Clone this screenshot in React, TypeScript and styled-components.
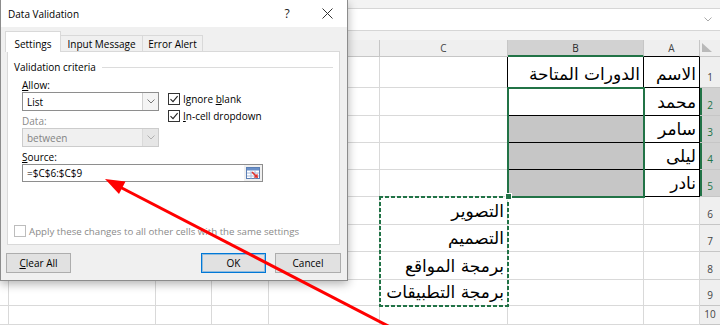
import styled, { createGlobalStyle } from 'styled-components'

const GREEN = '#217346'
const GRID_LINE = '#d9d9d9'
const HEAD_LINE = '#c6c6c6'
const UI_FONT = `'Open Sans', 'Noto Sans', sans-serif`
const AR_FONT = `'DejaVu Sans', 'Noto Sans', sans-serif`

const GlobalStyle = createGlobalStyle`
  html, body { margin: 0; padding: 0; }
  body { background: #f3f3f3; font-family: ${UI_FONT}; }
`

// the sheet runs right to left, so letters grow toward the left
const columns = [
  { key: 'H', width: 9 },
  { key: 'G', width: 147 },
  { key: 'F', width: 56 },
  { key: 'E', width: 57 },
  { key: 'D', width: 111 },
  { key: 'C', width: 128 },
  { key: 'B', width: 136 },
  { key: 'A', width: 56 },
]
const rowHeights = [31, 28, 27, 27, 27, 28, 27, 28, 26, 19]

const values: Record<string, string> = {
  A1: 'الاسم',
  B1: 'الدورات المتاحة',
  A2: 'محمد',
  A3: 'سامر',
  A4: 'ليلى',
  A5: 'نادر',
  C6: 'التصوير',
  C7: 'التصميم',
  C8: 'برمجة المواقع',
  C9: 'برمجة التطبيقات',
}

const template = `
  grid-template-columns: ${columns.map((c) => c.width + 'px').join(' ')} 20px;
  grid-template-rows: 17px ${rowHeights.map((h) => h + 'px').join(' ')};
`

const Page = styled.div`
  position: relative;
  width: 720px;
  height: 325px;
  overflow: hidden;
  background: #f3f3f3;
`

const Excel = styled.div`
  display: flex;
  flex-direction: column;
  padding-top: 8px;
`

const FormulaBar = styled.div`
  box-sizing: border-box;
  height: 23px;
  margin-bottom: 9px;
  background: #fff;
  border-top: 1px solid #d6d6d6;
  border-bottom: 1px solid #d6d6d6;
  display: flex;
  align-items: center;
  justify-content: flex-end;
  padding-right: 8px;
`

const GridWrap = styled.div`
  position: relative;
`

const Grid = styled.div`
  display: grid;
  ${template}
  background: #fff;
`

// layer with the same tracks, holding the selection marks over the cells
const Marks = styled.div`
  position: absolute;
  inset: 0;
  display: grid;
  ${template}
  pointer-events: none;
`

const ColHead = styled.div<{ $on?: boolean; $ink?: boolean }>`
  box-sizing: border-box;
  background: ${(p) => (p.$on ? '#d2d2d2' : '#efefef')};
  border-right: 1px solid ${HEAD_LINE};
  border-bottom: ${(p) => (p.$on ? `2px solid ${GREEN}` : `1px solid ${p.$ink ? '#000' : HEAD_LINE}`)};
  color: ${(p) => (p.$on ? '#262626' : '#444')};
  font: 10px ${UI_FONT};
  display: flex;
  align-items: center;
  justify-content: center;
`

const Corner = styled.div`
  box-sizing: border-box;
  background: #efefef;
  border-bottom: 1px solid ${HEAD_LINE};
  display: flex;
  align-items: flex-end;
  padding: 0 0 4px 2px;
`

const RowHead = styled.div<{ $on?: boolean }>`
  box-sizing: border-box;
  background: ${(p) => (p.$on ? '#d2d2d2' : '#efefef')};
  border-bottom: 1px solid ${HEAD_LINE};
  box-shadow: ${(p) => (p.$on ? `inset 2px 0 0 ${GREEN}` : 'none')};
  color: ${(p) => (p.$on ? GREEN : '#444')};
  font: 10px ${UI_FONT};
  display: flex;
  align-items: flex-end;
  justify-content: center;
  padding-bottom: 3px;
`

const Cell = styled.div<{ $right?: string; $bottom?: string; $fill?: boolean }>`
  box-sizing: border-box;
  min-width: 0;
  border-right: 1px solid ${(p) => p.$right ?? GRID_LINE};
  border-bottom: 1px solid ${(p) => p.$bottom ?? GRID_LINE};
  background: ${(p) => (p.$fill ? '#c6c6c6' : '#fff')};
  display: flex;
  align-items: flex-end;
  justify-content: flex-end;
  padding: 0 3px 3px 0;
  font: 17px/1.2 ${AR_FONT};
  color: #000;
  white-space: nowrap;
`

const Selection = styled.div`
  grid-column: 7;
  grid-row: 3 / 7;
  margin: -1px;
  border: 2px solid ${GREEN};
  position: relative;
  &::after {
    content: '';
    position: absolute;
    left: -4px;
    bottom: -4px;
    width: 5px;
    height: 5px;
    background: ${GREEN};
    border: 1px solid #fff;
  }
`

const dash = (dir: string) => `repeating-linear-gradient(${dir}, ${GREEN} 0 4px, transparent 4px 6px)`

const CopyMarquee = styled.div`
  grid-column: 6;
  grid-row: 7 / 11;
  margin: -1px;
  background:
    ${dash('90deg')} top / 100% 2px no-repeat,
    ${dash('90deg')} bottom / 100% 2px no-repeat,
    ${dash('180deg')} left / 2px 100% no-repeat,
    ${dash('180deg')} right / 2px 100% no-repeat;
`

/* ---------- dialog ---------- */

const Dialog = styled.div`
  position: absolute;
  left: 0;
  top: 0;
  z-index: 5;
  box-sizing: border-box;
  width: 348px;
  height: 281px;
  background: #f0f0f0;
  border: 1px solid #8c8c8c;
  border-top: none;
  box-shadow: 0 3px 9px rgba(0, 0, 0, 0.3);
  font: 10px ${UI_FONT};
  color: #000;
  display: flex;
  flex-direction: column;
`

const TitleBar = styled.div`
  height: 27px;
  background: #fff;
  display: flex;
  align-items: center;
  padding-left: 7px;
  font-size: 10px;
`

const TitleText = styled.span`
  flex: 1;
`

const TitleButton = styled.div`
  width: 40px;
  height: 27px;
  display: flex;
  align-items: center;
  justify-content: center;
  font-size: 12px;
  color: #222;
`

const Tabs = styled.div`
  display: flex;
  align-items: flex-end;
  height: 21px;
  margin: 4px 0 -1px 4px;
  position: relative;
  z-index: 1;
`

const Tab = styled.div<{ $active?: boolean; $width: number }>`
  box-sizing: border-box;
  width: ${(p) => p.$width}px;
  height: ${(p) => (p.$active ? 21 : 17)}px;
  background: ${(p) => (p.$active ? '#fff' : '#f0f0f0')};
  border: 1px solid #d9d9d9;
  border-bottom: ${(p) => (p.$active ? 'none' : '1px solid #d9d9d9')};
  border-left: ${(p) => (p.$active ? '1px solid #d9d9d9' : 'none')};
  display: flex;
  align-items: center;
  justify-content: center;
  padding-top: ${(p) => (p.$active ? 3 : 1)}px;
  white-space: nowrap;
`

const Panel = styled.div`
  box-sizing: border-box;
  width: 333px;
  height: 194px;
  margin-left: 6px;
  background: #fff;
  border: 1px solid #d9d9d9;
  padding: 8px 6px 6px 6px;
  display: flex;
  flex-direction: column;
`

const Legend = styled.div`
  display: flex;
  align-items: center;
  gap: 6px;
  height: 14px;
  &::after {
    content: '';
    flex: 1;
    border-top: 1px solid #dcdcdc;
  }
`

const Criteria = styled.div`
  display: flex;
  margin: 4px 0 0 8px;
`

const LeftCol = styled.div`
  width: 137px;
  display: flex;
  flex-direction: column;
`

const Checks = styled.div`
  display: flex;
  flex-direction: column;
  gap: 5px;
  margin-left: 9px;
  padding-top: 15px;
`

const Label = styled.div<{ $off?: boolean; $gap?: number }>`
  height: 14px;
  line-height: 14px;
  margin-top: ${(p) => p.$gap ?? 0}px;
  color: ${(p) => (p.$off ? '#8a8a8a' : '#000')};
`

const Select = styled.div<{ $off?: boolean }>`
  box-sizing: border-box;
  height: 19px;
  display: flex;
  border: 1px solid ${(p) => (p.$off ? '#cccccc' : '#8e8e8e')};
  background: ${(p) => (p.$off ? '#f0f0f0' : '#fff')};
  color: ${(p) => (p.$off ? '#838383' : '#000')};
`

const SelectValue = styled.div`
  flex: 1;
  display: flex;
  align-items: center;
  padding-left: 4px;
`

const SelectArrow = styled.div<{ $off?: boolean }>`
  width: 15px;
  border-left: 1px solid ${(p) => (p.$off ? '#dadada' : '#d0d0d0')};
  background: ${(p) => (p.$off ? '#e6e6e6' : '#f4f4f4')};
  display: flex;
  align-items: center;
  justify-content: center;
`

const SourceBlock = styled.div`
  margin-left: 8px;
  display: flex;
  flex-direction: column;
`

const Input = styled.div`
  box-sizing: border-box;
  width: 241px;
  height: 18px;
  border: 1px solid #8e8e8e;
  background: #fff;
  display: flex;
`

const InputText = styled.div`
  flex: 1;
  display: flex;
  align-items: center;
  padding-left: 4px;
`

const PickButton = styled.div`
  width: 18px;
  background: #f0f0f0;
  display: flex;
  align-items: center;
  justify-content: center;
`

const CheckRow = styled.label<{ $off?: boolean }>`
  display: flex;
  align-items: center;
  gap: 3px;
  height: 12px;
  white-space: nowrap;
  color: ${(p) => (p.$off ? '#8a8a8a' : '#000')};
`

const Box = styled.span<{ $off?: boolean }>`
  box-sizing: border-box;
  flex: none;
  width: 12px;
  height: 12px;
  border: 1px solid ${(p) => (p.$off ? '#bdbdbd' : '#333')};
  background: #fff;
  display: flex;
  align-items: center;
  justify-content: center;
`

const ApplyRow = styled(CheckRow)`
  margin-top: auto;
  height: 14px;
  font-size: 9.7px;
`

const ButtonRow = styled.div`
  display: flex;
  gap: 9px;
  padding: 8px 6px 0 5px;
`

const Button = styled.div<{ $default?: boolean }>`
  box-sizing: border-box;
  width: ${(p) => (p.$default ? 65 : 66)}px;
  height: 20px;
  background: #e1e1e1;
  border: 1px solid ${(p) => (p.$default ? '#0078d7' : '#adadad')};
  box-shadow: ${(p) => (p.$default ? 'inset 0 0 0 1px rgba(0, 120, 215, 0.35)' : 'none')};
  display: flex;
  align-items: center;
  justify-content: center;
  &:first-child {
    width: 65px;
    margin-right: auto;
  }
`

const Overlay = styled.svg`
  position: absolute;
  left: 0;
  top: 0;
  z-index: 10;
  pointer-events: none;
`

const Chevron = ({ color = '#777' }: { color?: string }) => (
  <svg width='8' height='5' viewBox='0 0 8 5'>
    <path d='M0.5 0.5L4 4L7.5 0.5' stroke={color} fill='none' />
  </svg>
)

const Tick = ({ show }: { show: boolean }) => (
  <svg width='10' height='10' viewBox='0 0 10 10'>
    {show && <path d='M1.5 5.2L4 7.6L8.6 2.2' stroke='#222' strokeWidth='1.1' fill='none' />}
  </svg>
)

const PickIcon = () => (
  <svg width='14' height='12' viewBox='0 0 14 12'>
    <rect x='0.5' y='0.5' width='13' height='11' fill='#fff' stroke='#5b7fb5' />
    <rect x='1' y='1' width='12' height='2.5' fill='#6a8fc8' />
    <path d='M1 6h12M1 9h12M5 3.5v8M9 3.5v8' stroke='#a9bcdc' />
    <path d='M6 5l4.2 4.2' stroke='#e0322d' strokeWidth='1.6' />
    <path d='M12 11L7.6 10.4L11.4 6.6Z' fill='#e0322d' />
  </svg>
)

const Sheet = () => (
  <Excel>
    <FormulaBar>
      <Chevron color='#aaa' />
    </FormulaBar>
    <GridWrap>
      <Grid>
        {columns.map((c) => (
          <ColHead key={c.key} $on={c.key === 'B'} $ink={c.key === 'A'}>
            {c.key}
          </ColHead>
        ))}
        <Corner>
          <svg width='10' height='9' viewBox='0 0 10 9'>
            <path d='M0 0L0 9L10 9Z' fill='#b9b9b9' />
          </svg>
        </Corner>
        {rowHeights.map((_, i) => {
          const row = i + 1
          return [
            ...columns.map((c) => {
              const table = (c.key === 'A' || c.key === 'B') && row <= 5
              const edge = c.key === 'C' && row <= 5
              const text = values[c.key + row]
              return (
                <Cell
                  key={c.key + row}
                  $right={table || edge ? '#000' : undefined}
                  $bottom={table ? '#000' : undefined}
                  $fill={c.key === 'B' && row >= 3 && row <= 5}
                >
                  {text && <span dir='rtl'>{text}</span>}
                </Cell>
              )
            }),
            <RowHead key={'r' + row} $on={row >= 2 && row <= 5}>
              {row}
            </RowHead>,
          ]
        })}
      </Grid>
      <Marks>
        <Selection />
        <CopyMarquee />
      </Marks>
    </GridWrap>
  </Excel>
)

const DataValidation = () => (
  <Dialog>
    <TitleBar>
      <TitleText>Data Validation</TitleText>
      <TitleButton>?</TitleButton>
      <TitleButton>
        <svg width='11' height='11' viewBox='0 0 11 11'>
          <path d='M0.5 0.5L10.5 10.5M10.5 0.5L0.5 10.5' stroke='#333' strokeWidth='1' />
        </svg>
      </TitleButton>
    </TitleBar>

    <Tabs>
      <Tab $active $width={56}>Settings</Tab>
      <Tab $width={82}>Input Message</Tab>
      <Tab $width={60}>Error Alert</Tab>
    </Tabs>

    <Panel>
      <Legend>Validation criteria</Legend>

      <Criteria>
        <LeftCol>
          <Label>
            <u>A</u>llow:
          </Label>
          <Select>
            <SelectValue>List</SelectValue>
            <SelectArrow>
              <Chevron />
            </SelectArrow>
          </Select>
          <Label $off $gap={3}>
            Data:
          </Label>
          <Select $off>
            <SelectValue>between</SelectValue>
            <SelectArrow $off>
              <Chevron color='#b0b0b0' />
            </SelectArrow>
          </Select>
        </LeftCol>
        <Checks>
          <CheckRow>
            <Box>
              <Tick show />
            </Box>
            <span>
              Ignore <u>b</u>lank
            </span>
          </CheckRow>
          <CheckRow>
            <Box>
              <Tick show />
            </Box>
            <span>
              <u>I</u>n-cell dropdown
            </span>
          </CheckRow>
        </Checks>
      </Criteria>

      <SourceBlock>
        <Label $gap={3}>
          <u>S</u>ource:
        </Label>
        <Input>
          <InputText>=$C$6:$C$9</InputText>
          <PickButton>
            <PickIcon />
          </PickButton>
        </Input>
      </SourceBlock>

      <ApplyRow $off>
        <Box $off />
        <span>Apply these changes to all other cells with the same settings</span>
      </ApplyRow>
    </Panel>

    <ButtonRow>
      <Button>
        <span>
          <u>C</u>lear All
        </span>
      </Button>
      <Button $default>OK</Button>
      <Button>Cancel</Button>
    </ButtonRow>
  </Dialog>
)

const App = () => {
  return (
    <Page>
      <GlobalStyle />
      <Sheet />
      <DataValidation />
      <Overlay width='720' height='325' viewBox='0 0 720 325'>
        <line x1='392' y1='328' x2='118' y2='186' stroke='#ff0000' strokeWidth='3' />
        <path d='M105 179L125.5 181.5L119 194Z' fill='#ff0000' />
      </Overlay>
    </Page>
  )
}

export default App
